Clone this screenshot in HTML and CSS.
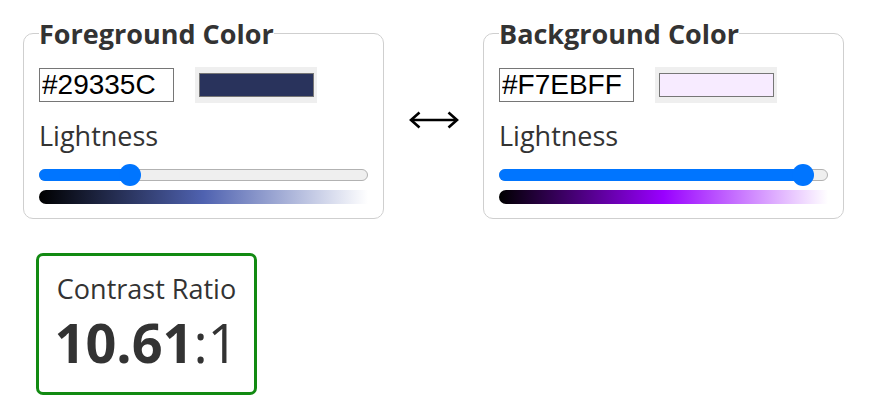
FILE: index.html
```html
<!DOCTYPE html>
<html lang="en">
<head>
<meta charset="utf-8">
<title>Contrast Checker</title>
<link rel="stylesheet" href="styles.css">
</head>
<body>
<main class="app">
  <div class="pickers">
    <fieldset class="picker">
      <legend class="picker-title">Foreground Color</legend>
      <div class="picker-body">
        <div class="color-row">
          <input class="hex-input" type="text" value="#29335C">
          <span class="swatch"><span class="swatch-color" style="background:#29335C"></span></span>
        </div>
        <label class="lightness-label">Lightness</label>
        <div class="slider" style="--value:27.7%">
          <div class="track"><div class="fill"></div></div>
          <div class="thumb"></div>
        </div>
        <div class="gradient gradient-fg"></div>
      </div>
    </fieldset>

    <div class="swap">
      <svg class="swap-icon" width="50" height="18" viewBox="0 0 50 18" aria-hidden="true">
        <line x1="2" y1="9" x2="48" y2="9" stroke="#000" stroke-width="2.4"/>
        <polyline points="10.5,1.5 2,9 10.5,16.5" fill="none" stroke="#000" stroke-width="2.6" stroke-linejoin="miter"/>
        <polyline points="39.5,1.5 48,9 39.5,16.5" fill="none" stroke="#000" stroke-width="2.6" stroke-linejoin="miter"/>
      </svg>
    </div>

    <fieldset class="picker">
      <legend class="picker-title">Background Color</legend>
      <div class="picker-body">
        <div class="color-row">
          <input class="hex-input" type="text" value="#F7EBFF">
          <span class="swatch"><span class="swatch-color" style="background:#F7EBFF"></span></span>
        </div>
        <label class="lightness-label">Lightness</label>
        <div class="slider" style="--value:92.4%">
          <div class="track"><div class="fill"></div></div>
          <div class="thumb"></div>
        </div>
        <div class="gradient gradient-bg"></div>
      </div>
    </fieldset>
  </div>

  <div class="contrast">
    <div class="contrast-label">Contrast Ratio</div>
    <div class="contrast-value"><b class="contrast-number">10.61</b>:1</div>
  </div>
</main>
</body>
</html>
```

FILE: styles.css
```css
* {
  box-sizing: border-box;
}

html, body {
  margin: 0;
  background: #fff;
}

body {
  font-family: "Open Sans", "DejaVu Sans", sans-serif;
  color: #333;
}

.app {
  padding: 15px 0 0 23px;
}

.pickers {
  display: flex;
  align-items: center;
}

.picker {
  width: 361px;
  margin: 0;
  padding: 0 15px 14px;
  border: 1px solid #cfcfcf;
  border-radius: 10px;
  min-width: 0;
}

.picker-title {
  padding: 0;
  font-size: 27px;
  font-weight: 700;
  line-height: normal;
  color: #333;
}

.picker-body {
  padding-top: 15px;
  display: flex;
  flex-direction: column;
}

.color-row {
  display: flex;
  align-items: center;
  gap: 21px;
  height: 36px;
}

.hex-input {
  width: 135px;
  height: 34px;
  margin: 0;
  padding: 0 2px;
  border: 1px solid #767676;
  border-radius: 0;
  font-family: "Liberation Sans", Arial, sans-serif;
  font-size: 28px;
  line-height: 32px;
  color: #000;
  background: #fff;
  outline: none;
}

.swatch {
  width: 122px;
  height: 36px;
  background: #efefef;
  display: flex;
  align-items: center;
  justify-content: center;
}

.swatch-color {
  width: 115px;
  height: 24px;
  border: 1px solid #767676;
}

.lightness-label {
  display: block;
  margin-top: 14px;
  font-size: 27px;
  line-height: normal;
  color: #333;
}

.slider {
  position: relative;
  height: 22px;
  margin-top: 10px;
  display: flex;
  align-items: center;
}

.track {
  position: relative;
  width: 100%;
  height: 12px;
  border: 1px solid #b2b2b2;
  border-radius: 6px;
  background: #efefef;
}

.fill {
  position: absolute;
  left: -1px;
  top: -1px;
  bottom: -1px;
  width: calc(var(--value) + 1px);
  background: #0075ff;
  border-radius: 6px 0 0 6px;
}

.thumb {
  position: absolute;
  top: 0;
  left: var(--value);
  width: 22px;
  height: 22px;
  margin-left: -11px;
  border-radius: 50%;
  background: #0075ff;
}

.gradient {
  height: 14px;
  margin-top: 4px;
  border-radius: 7px 0 0 7px;
}

.gradient-fg {
  background: linear-gradient(to right, #000, #4f62b0 50%, #fff);
}

.gradient-bg {
  background: linear-gradient(to right, #000, #9900ff 50%, #fff);
}

.swap {
  width: 99px;
  display: flex;
  justify-content: center;
  padding-top: 6px;
}

.swap-icon {
  display: block;
}

.contrast {
  width: 221px;
  margin: 34px 0 0 13px;
  padding: 14px 0 15px;
  border: 3px solid #128a12;
  border-radius: 7px;
  text-align: center;
}

.contrast-label {
  font-size: 27px;
  line-height: normal;
}

.contrast-value {
  font-size: 54px;
  line-height: 70px;
}

.contrast-number {
  font-weight: 700;
}
```
